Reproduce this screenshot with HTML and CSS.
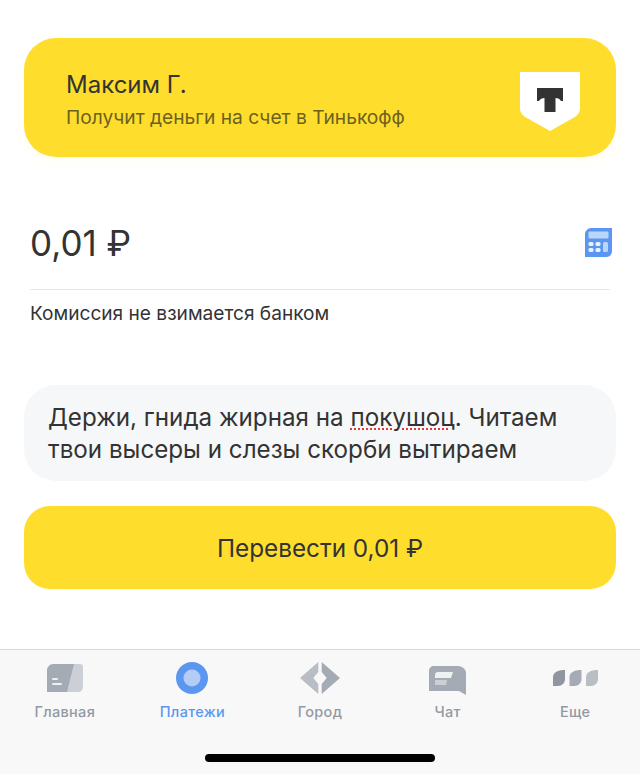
FILE: index.html
```html
<!DOCTYPE html>
<html lang="ru">
<head>
    <meta charset="UTF-8">
    <title>Перевод</title>
    <link rel="stylesheet" href="styles.css">
</head>
<body>
    <main class="content">
        <!-- Recipient card -->
        <section class="recipient">
            <div class="recipient-text">
                <div class="recipient-name">Максим Г.</div>
                <div class="recipient-note">Получит деньги на счет в Тинькофф</div>
            </div>
            <svg class="bank-logo" width="60" height="59" viewBox="0 0 60 59">
                <path d="M0 0H60V36C60 41 57 44 53 46L30 59L7 46C3 44 0 41 0 36Z" fill="#fff"/>
                <path d="M17 16H43V29H41C40 27 38 26 35.5 26V40H24.5V26C22 26 20 27 19 29H17Z" fill="#333"/>
            </svg>
        </section>

        <!-- Amount -->
        <section class="amount">
            <div class="amount-row">
                <span class="amount-value">0,01 ₽</span>
                <svg class="calc" width="27" height="29" viewBox="0 0 27 29">
                    <path d="M6 0H27V23C27 26 25 29 21 29H0V6C0 3 3 0 6 0Z" fill="#5b97f0"/>
                    <rect x="3.5" y="3.5" width="20" height="7" rx="1" fill="#bcd5fa"/>
                    <rect x="3.5" y="14" width="5" height="4" rx="1.5" fill="#eaf2fe"/>
                    <rect x="10.5" y="14" width="5" height="4" rx="1.5" fill="#eaf2fe"/>
                    <rect x="3.5" y="20" width="5" height="4" rx="1.5" fill="#eaf2fe"/>
                    <rect x="10.5" y="20" width="5" height="4" rx="1.5" fill="#eaf2fe"/>
                    <rect x="18" y="14" width="5" height="10" rx="1.5" fill="#bcd5fa"/>
                </svg>
            </div>
            <div class="amount-note">Комиссия не взимается банком</div>
        </section>

        <!-- Message -->
        <section class="message">
            <div>Держи, гнида жирная на <span class="typo">покушоц</span>. Читаем</div>
            <div>твои высеры и слезы скорби вытираем</div>
        </section>

        <button class="send" type="button">Перевести 0,01 ₽</button>
    </main>

    <!-- Tab bar -->
    <nav class="tabbar">
        <div class="tabs">
            <div class="tab">
                <div class="tab-icon">
                    <svg width="36" height="28" viewBox="0 0 36 28">
                        <path d="M22 0H33C35 0 36 1 36 3V22C36 26 34 28 31 28H14Z" fill="#ccd0d6"/>
                        <path d="M6 0H27L20 28H0V6C0 3 3 0 6 0Z" fill="#a5abb4"/>
                        <rect x="5" y="14" width="6" height="2" rx="1" fill="#eef0f2"/>
                        <rect x="5" y="19" width="10" height="2" rx="1" fill="#eef0f2"/>
                    </svg>
                </div>
                <span>Главная</span>
            </div>
            <div class="tab tab-active">
                <div class="tab-icon">
                    <svg width="32" height="32" viewBox="0 0 32 32">
                        <circle cx="16" cy="16" r="16" fill="#5b97f0"/>
                        <circle cx="16" cy="16" r="8.5" fill="#b4cdf6"/>
                    </svg>
                </div>
                <span>Платежи</span>
            </div>
            <div class="tab">
                <div class="tab-icon">
                    <svg width="40" height="34" viewBox="0 0 40 34">
                        <path d="M18.3 1L0 17L18.3 33V23L13.3 17L18.3 11Z" fill="#b9bdc4"/>
                        <path d="M21.7 1L40 17L21.7 33V23L26.7 17L21.7 11Z" fill="#a5abb4"/>
                    </svg>
                </div>
                <span>Город</span>
            </div>
            <div class="tab">
                <div class="tab-icon">
                    <svg class="chat-icon" width="37" height="29" viewBox="0 0 37 29">
                        <path d="M5 0H29C33 0 37 3 37 7V29L30 25H0V5C0 2 2 0 5 0Z" fill="#a5abb4"/>
                        <path d="M6 9C6 7 7 6 9 6H24L22 12H6Z" fill="#eef0f2"/>
                        <path d="M6 14H18L17 19H6Z" fill="#ccd0d6"/>
                    </svg>
                </div>
                <span>Чат</span>
            </div>
            <div class="tab">
                <div class="tab-icon">
                    <svg width="45" height="16" viewBox="0 0 45 16">
                        <path d="M5 1C7 0 9 0 12 0V9C12 13 9 16 5 16H0V7C0 4 2 2 5 1Z" fill="#8f96a0"/>
                        <path d="M21.5 1C23.5 0 25.5 0 28.5 0V9C28.5 13 25.5 16 21.5 16H16.5V7C16.5 4 18.5 2 21.5 1Z" fill="#a5abb4"/>
                        <path d="M38 1C40 0 42 0 45 0V9C45 13 42 16 38 16H33V7C33 4 35 2 38 1Z" fill="#b9bdc4"/>
                    </svg>
                </div>
                <span>Еще</span>
            </div>
        </div>
        <div class="home-bar"></div>
    </nav>
</body>
</html>
```

FILE: styles.css
```css
* {
    box-sizing: border-box;
}

body {
    margin: 0;
    height: 774px;
    overflow: hidden;
    display: flex;
    flex-direction: column;
    background: #fff;
    color: #333;
    font-family: 'Inter', 'Roboto', sans-serif;
}

.content {
    flex: 1;
    padding: 38px 24px 0;
}

/* Recipient card */
.recipient {
    height: 119px;
    padding: 0 36px 0 42px;
    display: flex;
    justify-content: space-between;
    align-items: center;
    background: #ffdd2d;
    border-radius: 32px;
    box-shadow: 0 4px 16px rgba(255, 221, 45, 0.06);
}

.recipient-text {
    padding-top: 3px;
}

.bank-logo {
    margin-top: 8px;
}

.recipient-name {
    font-size: 24px;
    line-height: 30px;
}

.recipient-note {
    margin-top: 5px;
    font-size: 19.2px;
    line-height: 24px;
    color: #6b6220;
}

/* Amount */
.amount {
    padding: 0 6px;
    margin-top: 60px;
}

.amount-row {
    height: 73px;
    display: flex;
    justify-content: space-between;
    align-items: center;
    border-bottom: 1px solid #e7e8ea;
    padding-bottom: 21px;
}

.amount-value {
    font-size: 35px;
}

.calc {
    margin-right: -2px;
}

.amount-note {
    margin-top: 11px;
    font-size: 19.1px;
    line-height: 24px;
}

/* Message */
.message {
    margin-top: 60px;
    height: 96px;
    padding: 17px 24px 0;
    background: #f6f7f8;
    border-radius: 32px;
    font-size: 24.2px;
    line-height: 32px;
}

.typo {
    text-decoration: underline dotted #e53935 2px;
    text-underline-offset: 2px;
}

.send {
    display: block;
    width: 100%;
    height: 83px;
    margin-top: 25px;
    border: none;
    border-radius: 26px;
    background: #ffdd2d;
    color: #333;
    font-family: inherit;
    font-size: 24.3px;
}

/* Tab bar */
.tabbar {
    height: 125px;
    background: #f8f8f9;
    border-top: 1px solid #d8d8da;
}

.tabs {
    display: grid;
    grid-template-columns: repeat(5, 1fr);
    padding: 0 1px;
}

.tab {
    display: flex;
    flex-direction: column;
    align-items: center;
    padding-top: 9px;
    font-size: 14.5px;
    font-weight: 500;
    letter-spacing: 0.3px;
    line-height: 20px;
    color: #9299a2;
}

.tab-icon {
    height: 38px;
    margin-bottom: 5px;
    display: flex;
    align-items: center;
}

.chat-icon {
    margin-top: 5px;
}

.tab-active {
    color: #5b97f0;
}

.home-bar {
    width: 230px;
    height: 8px;
    margin: 32px auto 0;
    background: #000;
    border-radius: 4px;
}
```
